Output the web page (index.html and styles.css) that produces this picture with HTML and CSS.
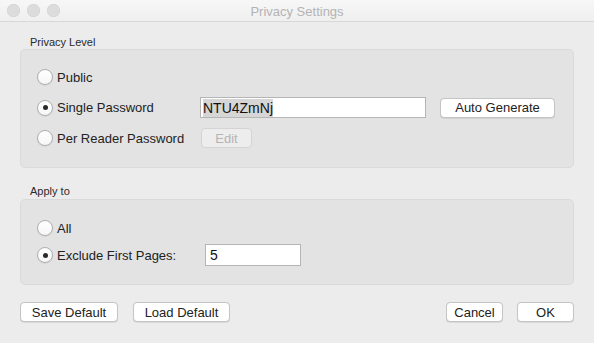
FILE: index.html
```html
<!DOCTYPE html>
<html>
<head>
<meta charset="utf-8">
<link rel="stylesheet" href="styles.css">
</head>
<body>
<div class="window">
  <div class="titlebar">
    <div class="lights"><span class="light"></span><span class="light"></span><span class="light"></span></div>
    <div class="title">Privacy Settings</div>
  </div>
  <div class="content">
    <div class="label first">Privacy Level</div>
    <div class="group g1">
      <div class="row r-public">
        <span class="radio"></span><span class="rtext">Public</span>
      </div>
      <div class="row r-single">
        <span class="radio on"></span><span class="rtext w-single">Single Password</span>
        <span class="field pw"><span class="sel">NTU4ZmNj</span></span>
        <span class="btn autogen">Auto Generate</span>
      </div>
      <div class="row r-reader">
        <span class="radio"></span><span class="rtext w-reader">Per Reader Password</span>
        <span class="btn edit disabled">Edit</span>
      </div>
    </div>
    <div class="label second">Apply to</div>
    <div class="group g2">
      <div class="row r-all">
        <span class="radio"></span><span class="rtext">All</span>
      </div>
      <div class="row r-excl">
        <span class="radio on"></span><span class="rtext w-excl">Exclude First Pages:</span>
        <span class="field pages">5</span>
      </div>
    </div>
    <div class="footer">
      <div class="left">
        <span class="btn save">Save Default</span>
        <span class="btn load">Load Default</span>
      </div>
      <div class="right">
        <span class="btn cancel">Cancel</span>
        <span class="btn ok">OK</span>
      </div>
    </div>
  </div>
</div>
</body>
</html>
```
FILE: styles.css
```css
html, body {
  margin: 0;
  padding: 0;
  width: 594px;
  height: 343px;
  overflow: hidden;
  font-family: "Liberation Sans", Arial, sans-serif;
  font-size: 13px;
  color: #222;
}
.window {
  width: 594px;
  height: 343px;
  background: #ececec;
  display: flex;
  flex-direction: column;
}
.titlebar {
  height: 21px;
  border-bottom: 1px solid #d8d8d8;
  background: linear-gradient(#f7f7f7, #efefef);
  display: flex;
  align-items: center;
  position: relative;
  flex-shrink: 0;
}
.lights {
  display: flex;
  gap: 7px;
  padding-left: 7px;
}
.light {
  width: 13px;
  height: 13px;
  border-radius: 50%;
  background: #dcdcdc;
  box-shadow: inset 0 0 0 0.5px #d0d0d0;
}
.title {
  position: absolute;
  left: 0;
  right: 0;
  text-align: center;
  color: #b4b4b4;
  font-size: 13px;
  top: 4px;
}
.content {
  padding: 0 20px;
  display: flex;
  flex-direction: column;
}
.label {
  font-size: 11px;
  color: #2a2a2a;
  padding-left: 10px;
  height: 13px;
  line-height: 13px;
}
.label.first { margin-top: 14px; }
.label.second { margin-top: 17px; }
.group {
  background: #e3e3e3;
  border: 1px solid #dadada;
  border-radius: 5px;
  box-sizing: border-box;
  position: relative;
}
.g1 { height: 119px; padding-top: 17px; }
.g2 { height: 86px; padding-top: 18px; margin-top: 1px; }
.row {
  display: flex;
  align-items: center;
  height: 20px;
  padding-left: 16px;
}
.r-single { margin-top: 10px; height: 21px; }
.r-reader { margin-top: 10px; }
.r-excl { margin-top: 6px; height: 22px; }
.radio {
  width: 16px;
  height: 16px;
  border-radius: 50%;
  background: linear-gradient(#ffffff, #f6f6f6);
  border: 1px solid #b0b0b0;
  box-sizing: border-box;
  display: flex;
  align-items: center;
  justify-content: center;
  flex-shrink: 0;
  box-shadow: 0 0.5px 1px rgba(0,0,0,0.12);
}
.radio.on::after {
  content: "";
  width: 5px;
  height: 5px;
  border-radius: 50%;
  background: #2a2a2a;
}
.rtext {
  margin-left: 4px;
  white-space: nowrap;
}
.w-single { width: 143px; }
.w-reader { width: 143px; }
.w-excl { width: 148px; }
.field {
  background: #fff;
  border: 1px solid #b5b5b5;
  box-sizing: border-box;
  height: 21px;
  display: flex;
  align-items: center;
  padding-left: 2px;
  font-size: 14px;
  color: #111;
}
.field.pw { width: 226px; }
.field.pages { width: 96px; height: 22px; padding-left: 4px; }
.sel { background: #d6d6d6; padding: 1px 0; }
.btn {
  display: inline-flex;
  align-items: center;
  justify-content: center;
  height: 20px;
  box-sizing: border-box;
  background: #fff;
  border: 1px solid #c4c4c4;
  border-radius: 4px;
  box-shadow: 0 0.5px 0.5px rgba(0,0,0,0.15);
  font-size: 13px;
  color: #222;
  white-space: nowrap;
}
.autogen { width: 115px; margin-left: 14px; }
.edit { width: 51px; margin-left: 1px; }
.btn.disabled {
  background: #ededed;
  border-color: #d4d4d4;
  color: #b4b4b4;
  box-shadow: none;
}
.footer {
  margin-top: 17px;
  display: flex;
  justify-content: space-between;
}
.left, .right { display: flex; gap: 15px; }
.right { gap: 14px; }
.save { width: 98px; }
.load { width: 97px; }
.cancel { width: 57px; }
.ok { width: 57px; }
```
